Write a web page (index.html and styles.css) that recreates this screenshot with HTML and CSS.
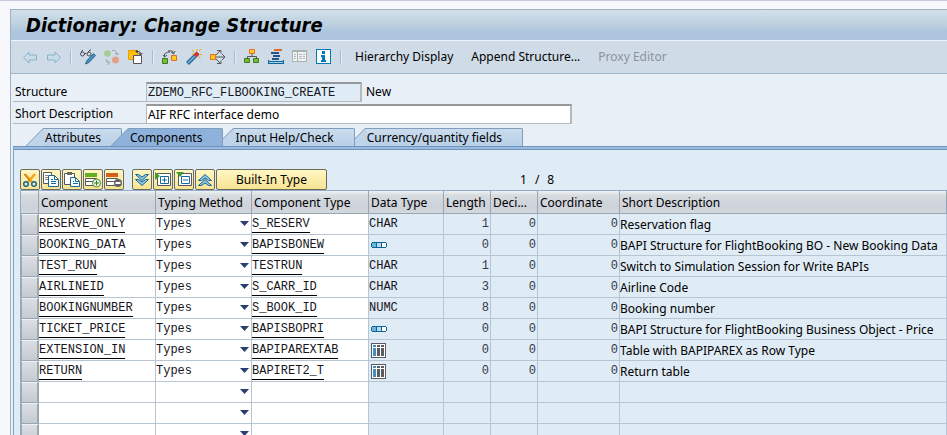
FILE: index.html
```html
<!DOCTYPE html>
<html lang="en">
<head>
<meta charset="utf-8">
<title>Dictionary: Change Structure</title>
<link rel="stylesheet" href="styles.css">
</head>
<body>
<svg class="defs" aria-hidden="true">
  <symbol id="i-struct" viewBox="0 0 16 6"><path fill="#0e6496" d="M1 0h14v1h1v4h-1v1H1V5H0V1h1z"/><path fill="#6db5da" d="M1 1h4v4H1z"/><path fill="#b5dbee" d="M6 1h4v4H6z"/><path fill="#fff" d="M11 1h4v4h-4z"/></symbol>
  <symbol id="i-table" viewBox="0 0 15 15"><path fill="#5c5c60" d="M0 0h15v15H0z"/><path fill="#fff" d="M1 1h13v13H1z"/><path fill="#3f8fc0" d="M2 2h3v2H2zM2 5h3v8H2z"/><path fill="#5c5c60" d="M6 2h3v2H6zM6 5h3v8H6zM10 2h3v2h-3zM10 5h3v8h-3z"/></symbol>
  <symbol id="i-slope" viewBox="0 0 18 18"><path class="slope-fill" d="M0 18L16 1.500Q17 .5 18 .5V18z"/><path class="slope-line" fill="none" d="M0 18L16 1.500Q17 .5 18 .5"/></symbol>
</svg>
<main class="window">
  <h1 class="title">Dictionary: Change Structure</h1>
  <div class="toolbar">
    <button class="tool" aria-label="Back"><svg viewBox="0 0 16 16"><path fill="#c9dde9" stroke="#86b4cb" d="M1.500 8.500L7 3v3h7.500v5H7v3z"/></svg></button>
    <button class="tool" aria-label="Forward"><svg viewBox="0 0 16 16"><path fill="#c9dde9" stroke="#86b4cb" d="M14.500 8.500L9 3v3H1.500v5H9v3z"/></svg></button>
    <span class="sep"></span>
    <button class="tool" aria-label="Display or change"><svg viewBox="0 0 16 16"><g fill="none" stroke="#4a4f55"><circle cx="2.500" cy="5" r="2"/><circle cx="9" cy="5" r="2"/><path d="M4.500 4.500h2M1 3l2-2M8 3l2-2h1"/></g><path fill="#4390c3" stroke="#1d5378" stroke-width=".8" d="M13.500 4.500l2 2L9 13.500l-3.500 1.500L7 11.500z"/></svg></button>
    <button class="tool" aria-label="Active or inactive"><svg viewBox="0 0 16 16"><circle cx="3.500" cy="4.500" r="3.300" fill="#a4cd96"/><circle cx="11.500" cy="11" r="3.500" fill="#e4a189"/><path fill="none" stroke="#a2a7aa" d="M8 1.500h2.500Q13 2 13 5.500M11 4l2 2 2-2M2 10q0 4 3.500 4M3.500 11.500L5.500 14l-2 2"/></svg></button>
    <button class="tool" aria-label="Other object"><svg viewBox="0 0 16 16"><path fill="#ffc20e" stroke="#f09a00" d="M.5 1.500h9v9h-9z"/><path fill="#fff" stroke="#555" d="M5.500 6.500h8v8h-8z"/><path fill="none" stroke="#333" d="M8 2.500h2.500q2 0 2 3M9.500 1L8 2.500 9.500 4M10.500 4l2 2 2-2"/></svg></button>
    <span class="sep"></span>
    <button class="tool" aria-label="Check"><svg viewBox="0 0 16 16"><path fill="#79bc2d" stroke="#397b24" d="M.5 9.500h5v5h-5z"/><path fill="#ffc81f" stroke="#e56d20" d="M9.500 6.500h5v5h-5z"/><path fill="none" stroke="#55595c" d="M2.500 8V5l5-3h3l1 3M1 6l1.500 2L5 6M7 1v3M9 3l2.500 2L13 2"/></svg></button>
    <button class="tool" aria-label="Activate"><svg viewBox="0 0 16 16"><path stroke="#205a84" stroke-width="4" d="M1.500 14.500L12 4"/><path stroke="#65aad5" stroke-width="2" d="M2 14L12 4"/><path stroke="#df2d1e" stroke-width="3.500" d="M9 7l3-3"/><path stroke="#f9a500" d="M6 1l2 2M11 0v2M13 2l2-2M13.500 5.500H16M12.500 7.500l2 2M6 5h2"/></svg></button>
    <button class="tool" aria-label="Where-used list"><svg viewBox="0 0 16 16"><path fill="#ffc81f" stroke="#e56d20" d="M.5 5.500h5v5h-5z"/><path fill="none" stroke="#55595c" d="M6 8h9M12 5l3 3-3 3M6 6l4-4M7 1.500h4v3M6 10l4 4M11 11.500v3H7"/></svg></button>
    <span class="sep"></span>
    <button class="tool" aria-label="Hierarchy"><svg viewBox="0 0 16 16"><path fill="#ffc81f" stroke="#e56d20" d="M5.500.5h5v4h-5z"/><path fill="none" stroke="#555" d="M8 5v2.500M3.500 9V7.500h9V9"/><path fill="#79bc2d" stroke="#397b24" d="M.5 9.500h5v4h-5zM9.500 9.500h5v4h-5z"/></svg></button>
    <button class="tool" aria-label="Object list"><svg class="crisp" viewBox="0 0 16 16"><path fill="#dc6a2b" d="M6 0h8v2H6z"/><path fill="#24568c" d="M3 3h8v2H3zM5 6h7v2H5zM4 9h7v2H4z"/><path fill="#0c6396" d="M0 11h1v1h14v-1h1v4H0z"/><path fill="#a7d3e8" d="M1 13h14v1H1z"/></svg></button>
    <button class="tool" aria-label="Technical settings" disabled><svg class="crisp" viewBox="0 0 16 16"><path fill="#adb0b3" d="M0 1h15v12H0z"/><path fill="#f1f2f2" d="M1 3h4v9H1zM6 3h8v9H6z"/><path fill="#b5b7b9" d="M2 5h2v1H2zM2 7h2v1H2zM2 9h2v1H2zM7 5h3v1H7zM7 7h3v1H7zM7 9h3v1H7zM11 5h2v1h-2zM11 7h2v1h-2zM11 9h2v1h-2z"/></svg></button>
    <button class="tool" aria-label="Information"><svg class="crisp" viewBox="0 0 16 16"><path fill="#0079bd" d="M0 0h15v15H0z"/><path fill="#fff" d="M1 1h13v13H1z"/><path fill="#0079bd" d="M6 2h3v3H6zM5 6h4v5h1v2H5v-2h1V8H5z"/></svg></button>
    <span class="sep"></span>
    <div class="menu">
      <button class="text-tool">Hierarchy Display</button>
      <button class="text-tool">Append Structure...</button>
      <button class="text-tool" disabled>Proxy Editor</button>
    </div>
  </div>

  <div class="form">
    <label for="structure">Structure</label>
    <div class="field"><input class="name mono" id="structure" value="ZDEMO_RFC_FLBOOKING_CREATE" readonly><span>New</span></div>
    <label for="descr">Short Description</label>
    <div class="field"><input class="descr" id="descr" value="AIF RFC interface demo"></div>
  </div>

  <div class="tabs" role="tablist">
    <button class="tab" role="tab"><svg><use href="#i-slope"/></svg><span>Attributes</span></button>
    <button class="tab selected" role="tab" aria-selected="true"><svg><use href="#i-slope"/></svg><span>Components</span></button>
    <button class="tab" role="tab"><svg><use href="#i-slope"/></svg><span>Input Help/Check</span></button>
    <button class="tab last" role="tab"><svg><use href="#i-slope"/></svg><span>Currency/quantity fields</span></button>
  </div>

  <section class="panel">
    <div class="grid-tools">
      <button class="key" aria-label="Cut"><svg viewBox="0 0 16 16"><path stroke="#f2a51d" stroke-width="2.500" d="M3 2l7 8M13 2l-7 8"/><path stroke="#b36b12" d="M2 2l6 7"/><g fill="none" stroke="#17679a" stroke-width="1.500"><circle cx="4" cy="12" r="2.300"/><circle cx="12" cy="12" r="2.300"/></g></svg></button>
      <button class="key" aria-label="Copy"><svg viewBox="0 0 16 16"><path fill="#fff" stroke="#55595c" d="M.5.500h8v11h-8z"/><path stroke="#888" d="M2 3.500h3M2 5.500h3M2 7.500h3"/><path fill="#fff" stroke="#17679a" d="M5.500 3.500h6l4 4v7h-10z"/><path fill="none" stroke="#17679a" d="M11.500 3.500v4h4M8 7.500h2M8 9.500h5M8 11.500h5"/></svg></button>
      <button class="key" aria-label="Paste"><svg viewBox="0 0 16 16"><path fill="#fff" stroke="#55595c" d="M.5 1.500h10v11H.5z"/><path fill="#666" d="M3 0h5v3H3z"/><path fill="#fff" stroke="#17679a" d="M6.500 5.500h5l4 4v5h-9z"/><path fill="none" stroke="#17679a" d="M11.500 5.500v4h4M9 9.500h1M9 11.500h5"/></svg></button>
      <button class="key" aria-label="Insert row"><svg viewBox="0 0 16 16"><path fill="#66ad24" d="M0 1h12v4H0z"/><path fill="#fff" stroke="#55595c" d="M.5 6.500h11v3H.5zM.5 9.500h11v4H.5z"/><circle cx="11.500" cy="11" r="4" fill="#eef6df" stroke="#4b9233"/><path stroke="#397b24" d="M9 11h5M11.500 8.500v5"/></svg></button>
      <button class="key" aria-label="Delete row"><svg viewBox="0 0 16 16"><path fill="#d95c1c" d="M0 1h12v4H0z"/><path fill="#fff" stroke="#55595c" d="M.5 6.500h11v3H.5zM.5 9.500h11v4H.5z"/><circle cx="12" cy="11" r="4" fill="#626367"/><path stroke="#fff" stroke-width="2" d="M9.500 11h5"/></svg></button>
      <div class="key-group">
        <button class="key" aria-label="Expand all"><svg viewBox="0 0 16 16"><path fill="#8dc6e2" stroke="#17679a" d="M1.500 2.500h3L8 5l3.500-2.500h3L8 8.500zM1.500 7.500h3L8 10l3.500-2.500h3L8 13.500z"/></svg></button>
        <button class="key" aria-label="Expand"><svg viewBox="0 0 16 16"><path fill="#fff" stroke="#55595c" d="M2.500 1.500h13v12h-13z"/><path fill="#fff" stroke="#17679a" d="M5.500 4.500h8v7h-8z"/><path stroke="#17679a" d="M7 8h5M9.500 5.500v5"/><path fill="#459b29" d="M0 0l5 4-5 4z"/></svg></button>
        <button class="key" aria-label="Collapse"><svg viewBox="0 0 16 16"><path fill="#fff" stroke="#55595c" d="M2.500 1.500h13v12h-13z"/><path fill="#fff" stroke="#17679a" d="M5.500 4.500h8v7h-8z"/><path stroke="#17679a" d="M7 8h5"/><path fill="#459b29" d="M0 0h8L4 5z"/></svg></button>
        <button class="key" aria-label="Collapse all"><svg viewBox="0 0 16 16"><path fill="#8dc6e2" stroke="#17679a" d="M1.500 8.500h3L8 6l3.500 2.500h3L8 2.500zM1.500 13.500h3L8 11l3.500 2.500h3L8 7.500z"/></svg></button>
        <button class="key wide">Built-In Type</button>
      </div>
      <div class="counter"><span>1</span><span>/</span><span>8</span></div>
    </div>

    <table class="fields">
      <colgroup><col class="c-sel"><col class="c-name"><col class="c-typing"><col class="c-name"><col class="c-data"><col class="c-num"><col class="c-num"><col class="c-coord"><col></colgroup>
      <thead><tr><th></th><th>Component</th><th>Typing Method</th><th>Component Type</th><th>Data Type</th><th>Length</th><th>Deci...</th><th>Coordinate</th><th>Short Description</th></tr></thead>
      <tbody>
        <tr><th></th><td class="edit"><a href="#">RESERVE_ONLY</a></td><td class="edit pick"><select aria-label="Typing method"><option>Types</option></select></td><td class="edit"><a href="#">S_RESERV</a></td><td class="mono">CHAR</td><td class="num">1</td><td class="num">0</td><td class="num">0</td><td>Reservation flag</td></tr>
        <tr><th></th><td class="edit"><a href="#">BOOKING_DATA</a></td><td class="edit pick"><select aria-label="Typing method"><option>Types</option></select></td><td class="edit"><a href="#">BAPISBONEW</a></td><td><svg class="struct"><use href="#i-struct"/></svg></td><td class="num">0</td><td class="num">0</td><td class="num">0</td><td>BAPI Structure for FlightBooking BO - New Booking Data</td></tr>
        <tr><th></th><td class="edit"><a href="#">TEST_RUN</a></td><td class="edit pick"><select aria-label="Typing method"><option>Types</option></select></td><td class="edit"><a href="#">TESTRUN</a></td><td class="mono">CHAR</td><td class="num">1</td><td class="num">0</td><td class="num">0</td><td>Switch to Simulation Session for Write BAPIs</td></tr>
        <tr><th></th><td class="edit"><a href="#">AIRLINEID</a></td><td class="edit pick"><select aria-label="Typing method"><option>Types</option></select></td><td class="edit"><a href="#">S_CARR_ID</a></td><td class="mono">CHAR</td><td class="num">3</td><td class="num">0</td><td class="num">0</td><td>Airline Code</td></tr>
        <tr><th></th><td class="edit"><a href="#">BOOKINGNUMBER</a></td><td class="edit pick"><select aria-label="Typing method"><option>Types</option></select></td><td class="edit"><a href="#">S_BOOK_ID</a></td><td class="mono">NUMC</td><td class="num">8</td><td class="num">0</td><td class="num">0</td><td>Booking number</td></tr>
        <tr><th></th><td class="edit"><a href="#">TICKET_PRICE</a></td><td class="edit pick"><select aria-label="Typing method"><option>Types</option></select></td><td class="edit"><a href="#">BAPISBOPRI</a></td><td><svg class="struct"><use href="#i-struct"/></svg></td><td class="num">0</td><td class="num">0</td><td class="num">0</td><td>BAPI Structure for FlightBooking Business Object - Price</td></tr>
        <tr><th></th><td class="edit"><a href="#">EXTENSION_IN</a></td><td class="edit pick"><select aria-label="Typing method"><option>Types</option></select></td><td class="edit"><a href="#">BAPIPAREXTAB</a></td><td><svg class="tbl"><use href="#i-table"/></svg></td><td class="num">0</td><td class="num">0</td><td class="num">0</td><td>Table with BAPIPAREX as Row Type</td></tr>
        <tr><th></th><td class="edit"><a href="#">RETURN</a></td><td class="edit pick"><select aria-label="Typing method"><option>Types</option></select></td><td class="edit"><a href="#">BAPIRET2_T</a></td><td><svg class="tbl"><use href="#i-table"/></svg></td><td class="num">0</td><td class="num">0</td><td class="num">0</td><td>Return table</td></tr>
        <tr><th></th><td class="edit"></td><td class="edit pick"><select aria-label="Typing method"><option></option></select></td><td class="edit"></td><td></td><td></td><td></td><td></td><td></td></tr>
        <tr><th></th><td class="edit"></td><td class="edit pick"><select aria-label="Typing method"><option></option></select></td><td class="edit"></td><td></td><td></td><td></td><td></td><td></td></tr>
        <tr><th></th><td class="edit"></td><td class="edit pick"><select aria-label="Typing method"><option></option></select></td><td class="edit"></td><td></td><td></td><td></td><td></td><td></td></tr>
      </tbody>
    </table>
  </section>
</main>
</body>
</html>
```
FILE: styles.css
```css
* { box-sizing: border-box; }
html { height: 100%; }
body {
  margin: 0;
  height: 100%;
  overflow: hidden;
  display: flex;
  padding: 8px 0 0 10px;
  border-top: 1px solid #c5cddf;
  background: #f6f8fc;
  color: #000;
  font: 12px/16px "Noto Sans", Tahoma, sans-serif;
}
button, input, select { font: inherit; color: inherit; }
button { margin: 0; padding: 0; border: 0; background: none; }
svg { display: block; }
.defs { position: absolute; width: 0; height: 0; }
.crisp, .struct, .tbl { shape-rendering: crispEdges; }
.mono, .edit, .num { font-family: "Liberation Mono", "Courier New", monospace; color: #16161c; }

.window {
  flex: 1;
  min-width: 0;
  border-left: 1px solid #a0b1c4;
  background: #e8eff6;
}
.title {
  margin: 0;
  padding: 0 15px;
  border-top: 1px solid #a0b1c4;
  border-bottom: 1px solid #eef4f9;
  background: linear-gradient(#d2e0eb, #b9cedd 55%, #adc5dd 70%, #adc5dd);
  font: italic bold 20px/30px "DejaVu Sans Condensed", Tahoma, sans-serif;
}
.toolbar {
  display: flex;
  align-items: center;
  gap: 8px;
  height: 33px;
  padding: 0 11px;
  border-bottom: 1px solid #a0b7cb;
  background: #cfdce7;
}
.tool svg { width: 16px; height: 16px; }
.sep { width: 2px; height: 14px; border-left: 1px solid #9fbcd8; border-right: 1px solid #e4edf5; }
.menu { display: flex; gap: 18px; padding-left: 5px; white-space: nowrap; }
.text-tool:disabled { color: #8d929c; }

.form {
  display: grid;
  grid-template-columns: 133px 1fr;
  row-gap: 2px;
  padding: 8px 2px 4px;
}
.form label { padding: 2px 0 0 2px; border-bottom: 1px solid #b4b8bc; }
.field { display: flex; align-items: center; gap: 4px; }
.field input {
  height: 20px;
  padding: 0 1px;
  border: 1px solid #b6b9bb;
  border-top: 2px solid #94989a;
  border-right-width: 2px;
  background: #fff;
  outline: 0;
}
.field .name { width: 216px; background: #dfebf5; }
.field .descr { width: 426px; }

.tabs { display: flex; padding-left: 15px; }
.tab { display: flex; height: 18px; position: relative; }
.tab svg { width: 18px; height: 18px; }
.tab span {
  padding: 1px 20px 0 1px;
  height: 18px;
  border-top: 1px solid #7f9dbc;
  border-right: 1px solid #7f9dbc;
  border-top-right-radius: 2px;
  background: linear-gradient(#cbdced, #b7cfe7);
  white-space: nowrap;
}
.slope-fill { fill: var(--tab, #c0d5ea); }
.slope-line { stroke: #7f9dbc; }
.tab + .tab { margin-left: -7px; z-index: 1; }
.tab + .selected { margin-left: -11px; z-index: 2; --tab: #8eb2db; }
.tab + .last { z-index: 0; }
.selected span { background: #8eb2db; }

.panel {
  margin-left: 2px;
  border-top: 1px solid #6f93bb;
  border-left: 1px solid #7fa3c8;
  background: #dfebf5;
  box-shadow: inset 0 2px #9abce0, inset 0 3px #6f93bb;
  padding: 22px 0 0 6px;
}
.grid-tools { display: flex; gap: 1px; }
.key {
  width: 20px;
  height: 21px;
  padding: 1px;
  border: 1px solid #6d6a5c;
  border-radius: 2px;
  background: linear-gradient(#fff7c4, #f8e392);
}
.key svg { width: 16px; height: 16px; }
.key-group { display: flex; gap: 1px; margin-left: 7px; }
.key.wide { width: 111px; padding: 0; }
.counter { display: flex; gap: 8px; margin-left: 192px; padding-top: 3px; }

.fields {
  width: 100%;
  table-layout: fixed;
  border-collapse: separate;
  border-spacing: 0;
  border-top: 1px solid #8fabc9;
  border-left: 1px solid #8fabc9;
}
.c-sel { width: 18px; }
.c-name { width: 117px; }
.c-typing { width: 96px; }
.c-data { width: 75px; }
.c-num { width: 47px; }
.c-coord { width: 82px; }
.fields th, .fields td {
  height: 21px;
  padding: 0;
  border-right: 1px solid #b7c5d3;
  border-bottom: 1px solid #b7c5d3;
  text-align: left;
  vertical-align: middle;
  white-space: nowrap;
  overflow: hidden;
  font-weight: normal;
}
.fields thead th {
  height: 23px;
  padding: 2px 0 0 2px;
  border-color: #98a5b2;
  background: linear-gradient(#eef2f4, #d7dcdf 20%, #cdd1da 70%, #d2d9dc);
}
.fields tbody th {
  border: 1px solid #9ba7b3;
  border-top-color: #eef1f4;
  border-right-width: 2px;
  background: linear-gradient(#dbdfe3, #c5cad0);
}
.fields .edit { background: #fff; }
.fields td { line-height: 17px; }
.edit a { display: inline-block; height: 17px; line-height: 17px; vertical-align: top; margin-top: 1px; border-bottom: 1px solid #000; color: inherit; text-decoration: none; }
.fields .num { padding-right: 1px; text-align: right; color: #333a4a; }
.pick { position: relative; }
.pick select {
  display: block;
  appearance: none;
  width: 100%;
  height: 20px;
  padding: 0;
  border: 0;
  background: none;
  outline: 0;
}
.pick::after {
  content: "";
  position: absolute;
  top: 7px;
  right: 2px;
  width: 9px;
  height: 5px;
  background: #283f70;
  clip-path: polygon(0 0, 100% 0, 50% 100%);
  pointer-events: none;
}
.struct { width: 16px; height: 6px; margin-left: 2px; }
.tbl { width: 15px; height: 15px; margin-left: 2px; }
```
